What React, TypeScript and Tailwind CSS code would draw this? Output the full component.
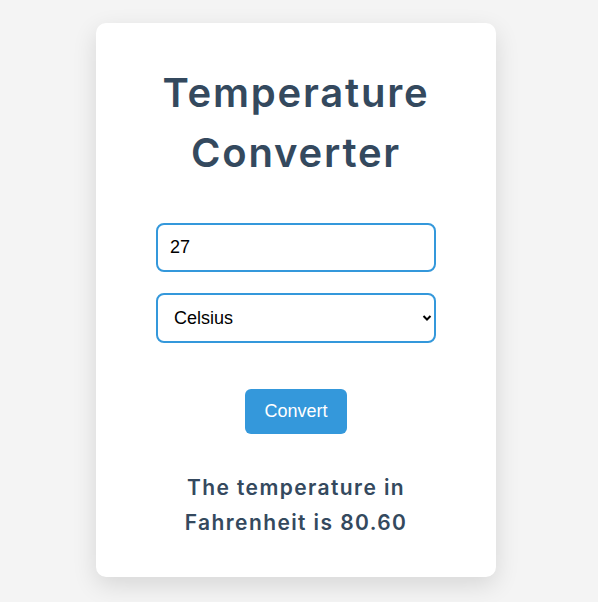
import React, { useState } from "react";

export default function App() {
  const [value, setValue] = useState("27");
  const [unit, setUnit] = useState("celsius");
  return (
    <div className="min-h-[602px] w-full bg-[#f4f4f4] flex justify-center pt-[23px] pr-[6px]">
      <div className="w-[400px] h-[554px] bg-white rounded-[10px] shadow-[0_8px_24px_rgba(0,0,0,0.12)] flex flex-col items-center pt-[40px]">
        <h1 className="text-[40px] leading-[60px] font-semibold tracking-[1.8px] text-[#34495e] text-center w-[300px] [font-family:Inter,'Noto_Sans',sans-serif]">
          Temperature Converter
        </h1>
        <input
          value={value}
          onChange={(e) => setValue(e.target.value)}
          className="mt-[40px] w-[280px] h-[49px] border-2 border-[#3498db] rounded-[8px] px-[12px] text-[18px] text-black outline-none [font-family:'Liberation_Sans',Arial,sans-serif]"
        />
        <div className="relative mt-[21px] w-[280px] h-[50px]">
          <select
            value={unit}
            onChange={(e) => setUnit(e.target.value)}
            className="appearance-none w-full h-full border-2 border-[#3498db] rounded-[8px] pl-[16px] pr-[30px] text-[18px] text-black bg-white outline-none [font-family:'Liberation_Sans',Arial,sans-serif]"
          >
            <option value="celsius">Celsius</option>
            <option value="fahrenheit">Fahrenheit</option>
          </select>
          <svg className="absolute right-[4px] top-[21px] pointer-events-none" width="10" height="8" viewBox="0 0 10 8">
            <path d="M1.5 2 L5 5.5 L8.5 2" stroke="#000" strokeWidth="2" fill="none" />
          </svg>
        </div>
        <button className="mt-[46px] w-[102px] h-[45px] bg-[#3498db] text-white text-[18px] rounded-[6px] [font-family:'Liberation_Sans',Arial,sans-serif]">
          Convert
        </button>
        <p className="mt-[36px] w-[280px] text-center text-[21px] leading-[35px] font-semibold tracking-[1.4px] text-[#34495e] [font-family:Inter,'Noto_Sans',sans-serif]">
          The temperature in Fahrenheit is 80.60
        </p>
      </div>
    </div>
  );
}
